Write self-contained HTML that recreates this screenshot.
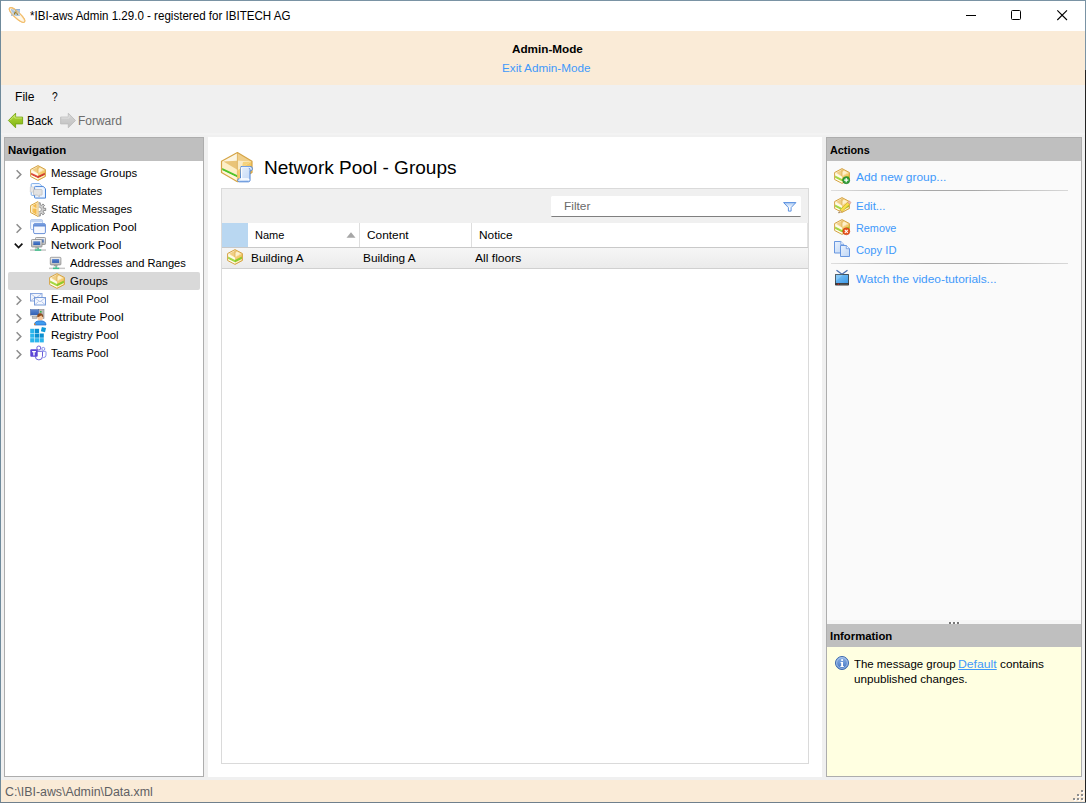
<!DOCTYPE html>
<html><head><meta charset="utf-8"><title>IBI-aws Admin</title>
<style>
*{box-sizing:border-box;margin:0;padding:0}
html,body{width:1086px;height:803px;overflow:hidden;background:#f0f0f0}
body{font-family:"Liberation Sans",sans-serif;font-size:12px;color:#000;position:relative}
.a{position:absolute}
.t{position:absolute;white-space:pre;line-height:16px;height:16px}
svg{position:absolute;overflow:visible}
</style></head><body>

<svg width="0" height="0" style="position:absolute"><defs>
<linearGradient id="gBoxL" x1="0" y1="0" x2="0" y2="1"><stop offset="0" stop-color="#fff6dc"/><stop offset="1" stop-color="#f9e2a6"/></linearGradient>
<linearGradient id="gBoxR" x1="0" y1="0" x2="1" y2="1"><stop offset="0" stop-color="#f7d787"/><stop offset="1" stop-color="#efb944"/></linearGradient>
<linearGradient id="gBoxT" x1="0" y1="0" x2="1" y2="1"><stop offset="0" stop-color="#fffaf0"/><stop offset="1" stop-color="#f2c767"/></linearGradient>
<linearGradient id="gGreen" x1="0" y1="0" x2="0" y2="1"><stop offset="0" stop-color="#b4d93a"/><stop offset="1" stop-color="#7fb414"/></linearGradient>
<linearGradient id="gGrey" x1="0" y1="0" x2="0" y2="1"><stop offset="0" stop-color="#d6d6d6"/><stop offset="1" stop-color="#c0c0c0"/></linearGradient>
<linearGradient id="gPage" x1="0" y1="0" x2="1" y2="1"><stop offset="0" stop-color="#eaf2fd"/><stop offset="1" stop-color="#bfd6f5"/></linearGradient>
<linearGradient id="gTv" x1="0" y1="0" x2="1" y2="1"><stop offset="0" stop-color="#7cc4f7"/><stop offset="1" stop-color="#3f9ae8"/></linearGradient>
<linearGradient id="gInfo" x1="0" y1="0" x2="0" y2="1"><stop offset="0" stop-color="#8fb3e6"/><stop offset="1" stop-color="#3f73c2"/></linearGradient>
<linearGradient id="gScr" x1="0" y1="0" x2="0" y2="1"><stop offset="0" stop-color="#5a86cf"/><stop offset="1" stop-color="#2f5fb5"/></linearGradient>
<linearGradient id="gMon" x1="0" y1="0" x2="0" y2="1"><stop offset="0" stop-color="#f4f4f4"/><stop offset="1" stop-color="#b8b8b8"/></linearGradient>
<linearGradient id="gFun" x1="0" y1="0" x2="0" y2="1"><stop offset="0" stop-color="#a6c7f2"/><stop offset=".6" stop-color="#ffffff"/></linearGradient>
<linearGradient id="gWinH" x1="0" y1="0" x2="0" y2="1"><stop offset="0" stop-color="#7ea3e2"/><stop offset="1" stop-color="#5b86d2"/></linearGradient>
<linearGradient id="gStat" x1="0" y1="0" x2="1" y2="0"><stop offset="0" stop-color="#f6c964"/><stop offset=".55" stop-color="#f3b84a"/><stop offset="1" stop-color="#fdf3da"/></linearGradient>
</defs></svg>

<div class="a" style="left:0px;top:0px;width:1086px;height:803px;background:#f0f0f0;"></div>
<div class="a" style="left:1px;top:1px;width:1084px;height:30px;background:#fff;"></div>
<div class="a" style="left:1px;top:31px;width:1084px;height:54px;background:#faebd7;"></div>
<div class="a" style="left:1px;top:780px;width:1084px;height:22px;background:#faebd7;"></div>
<div class="a" style="left:0px;top:0px;width:1086px;height:1px;background:#7a93a4;"></div>
<div class="a" style="left:0px;top:0px;width:1px;height:803px;background:#6f8a9b;"></div>
<div class="a" style="left:1085px;top:0px;width:1px;height:70px;background:#7a93a4;"></div>
<div class="a" style="left:1085px;top:70px;width:1px;height:733px;background:#222;"></div>
<div class="a" style="left:0px;top:802px;width:1086px;height:1px;background:#6f7f8c;"></div>
<div class="a" style="left:1px;top:133px;width:1084px;height:2px;background:#f3f3f3;"></div>
<svg style="left:9px;top:7px" width="16" height="16" viewBox="0 0 16 16">
<ellipse cx="8" cy="8" rx="10.200" ry="3" transform="rotate(43 8 8)" fill="#fff8ea" stroke="#efae4c" stroke-width="1.100"/>
<rect x="2" y="2" width="9" height="7" fill="#a3c0e0" opacity=".9"/>
<rect x="2" y="2" width="9" height="1" fill="#8fb0d6"/>
<path d="M5.100 7.700l1.700-3.800 2 3.800" fill="none" stroke="#9c7616" stroke-width="1.200"/>
<ellipse cx="8" cy="8" rx="10.200" ry="3" transform="rotate(43 8 8)" fill="none" stroke="#f3c47a" stroke-width="1.100" stroke-opacity=".7"/>
<ellipse cx="8.200" cy="8.200" rx="9" ry="1.900" transform="rotate(43 8.200 8.200)" fill="none" stroke="#fdf0d8" stroke-width=".7" stroke-opacity=".9"/>
</svg>
<svg style="left:0;top:0" width="1086" height="31"><path d="M966 15.500h10" stroke="#000" stroke-width="1"/><rect x="1011.500" y="10.500" width="9" height="9" rx="1" fill="none" stroke="#000" stroke-width="1"/><path d="M1057.300 10.300l9.700 9.700M1067 10.300l-9.700 9.700" stroke="#000" stroke-width="1.100"/></svg>
<svg style="left:8px;top:112px" width="16" height="16" viewBox="0 0 16 16">
<path d="M0.400 8.500L7.600 1.200v3.900h7v6.800h-7v3.900z" fill="url(#gGreen)" stroke="#76a512" stroke-width=".9" stroke-linejoin="round"/>
<path d="M2 8.300L6.800 3.500v2.500h7" fill="none" stroke="#d3ec86" stroke-width=".9" opacity=".9"/>
</svg>
<svg style="left:60px;top:112px" width="16" height="16" viewBox="0 0 16 16">
<path d="M15.500 8.500L8.300 1.200v3.900h-7.700v6.800h7.700v3.900z" fill="url(#gGrey)" stroke="#bdbdbd" stroke-width=".9" stroke-linejoin="round"/>
<path d="M1.400 6h7.700V3.400" fill="none" stroke="#e4e4e4" stroke-width=".9" opacity=".9"/>
</svg>
<div class="a" style="left:4px;top:137px;width:200px;height:640px;background:#fff;border:1px solid #adadad"></div>
<div class="a" style="left:5px;top:138px;width:198px;height:23px;background:#bfbfbf;"></div>
<div class="a" style="left:8px;top:272px;width:192px;height:18px;background:#d9d9d9;border-radius:2px"></div>
<svg style="left:30px;top:165px" width="16" height="16" viewBox="0 0 16 16">
<polygon points="8,0.6 15.4,4.5 15.4,11.5 8,15.4 0.6,11.5 0.6,4.5" fill="#fffbe8"/>
<polygon points="8,8.2 15.4,4.5 15.4,11.5 8,15.4" fill="url(#gBoxR)"/>
<polygon points="8,0.6 15.4,4.5 8,8.4 0.6,4.5" fill="url(#gBoxT)"/>
<polygon points="8,1.800 8,8 2.500,4.800" fill="#edc877" opacity=".8"/>
<polygon points="8,1.800 13.500,4.800 8,8" fill="#fff3d4" opacity=".85"/>
<polygon points="8,1.200 10.500,2.600 8,4" fill="#f2c86a" opacity=".8"/>
<path d="M8 1.500v6.800" stroke="#d9a94e" stroke-width=".7"/>
<polygon points="1.100,7.8 8,11.1 8,13.2 1.100,9.9" fill="#dd4a3c"/>
<polygon points="8,11.1 14.900,7.8 14.900,9.9 8,13.2" fill="#cf3b30"/>
<polygon points="1.100,9.9 8,13.2 8,14.900 1.100,11.200" fill="#fffce6"/>
<polygon points="8,13.2 14.900,9.9 14.900,11.200 8,14.900" fill="#fdf1c4"/>
<polygon points="8,0.6 15.4,4.5 15.4,11.5 8,15.4 0.6,11.5 0.6,4.5" fill="none" stroke="#d5a446" stroke-width="1" stroke-linejoin="round"/>
</svg>
<svg style="left:30px;top:183px" width="16" height="16" viewBox="0 0 16 16">
<path d="M2.200 0.600h7.200l2 2v9.800H2.200a1 1 0 0 1-1-1V1.600a1 1 0 0 1 1-1z" fill="#f7fbff" stroke="#6ea3e6" stroke-width=".9" stroke-linejoin="round"/>
<path d="M5.400 3.400h7.800l2.300 2.300v9.400H5.400a.9.900 0 0 1-.9-.9V4.300a.9.900 0 0 1 .9-.9z" fill="#dfebfc" stroke="#4a86da" stroke-width="1" stroke-linejoin="round"/>
<path d="M6.200 4.600h6.400l1.800 1.800v7.400H6.200z" fill="#eef5ff"/>
<rect x="0.300" y="3.900" width="3.600" height="5.200" rx=".6" fill="#e8e8e8" stroke="#cdcdcd" stroke-width=".7"/>
<path d="M4.200 6.500h7.200a.7.700 0 0 1 .7.700v4.200a.7.700 0 0 1-.7.700H9.300v1.900L7.600 12.100H4.200a.7.700 0 0 1-.7-.7V7.200a.7.700 0 0 1 .7-.7z" fill="#e2e2e2" stroke="#b9b9b9" stroke-width=".7"/>
</svg>
<svg style="left:30px;top:201px" width="16" height="16" viewBox="0 0 16 16">
<path d="M8.00 3.83 L7.95 1.80 L10.25 1.80 L10.20 3.83 L11.56 4.39 L12.95 2.92 L14.58 4.55 L13.11 5.94 L13.67 7.30 L15.70 7.25 L15.70 9.55 L13.67 9.50 L13.11 10.86 L14.58 12.25 L12.95 13.88 L11.56 12.41 L10.20 12.97 L10.25 15.00 L7.95 15.00 L8.00 12.97 L6.64 12.41 L5.25 13.88 L3.62 12.25 L5.09 10.86 L4.53 9.50 L2.50 9.55 L2.50 7.25 L4.53 7.30 L5.09 5.94 L3.62 4.55 L5.25 2.92 L6.64 4.39z" fill="#cfcfcf" stroke="#777" stroke-width=".8" stroke-linejoin="round"/>
<circle cx="9.100" cy="8.400" r="2.300" fill="#fbfbfb" stroke="#8a8a8a" stroke-width=".7"/>
<polygon points="8,0.600 8,15.400 0.600,11.500 0.600,4.500" fill="#fff7df"/>
<polygon points="8,1.500 8,14.600 2.300,11.300 2.300,4.800" fill="url(#gStat)"/>
<polygon points="8,8 2.300,4.800 2.300,7.500" fill="#fdf1cf" opacity=".7"/>
<polygon points="8,0.600 8,15.400 0.600,11.500 0.600,4.500" fill="none" stroke="#d9a63f" stroke-width="1" stroke-linejoin="round"/>
<path d="M8 1v14" stroke="#f3e3bd" stroke-width="1.200"/>
</svg>
<svg style="left:30px;top:219px" width="16" height="16" viewBox="0 0 16 16">
<rect x="0.6" y="0.6" width="12" height="10" rx="1.4" fill="#f7faff" stroke="#a9c2ea" stroke-width="1"/>
<path d="M0.6 2a1.4 1.4 0 0 1 1.4-1.4h9.2a1.4 1.4 0 0 1 1.4 1.4v1.3H0.6z" fill="#c3d5f2"/>
<rect x="3.6" y="4.6" width="11.8" height="10" rx="1.4" fill="#f6f8fe" stroke="#6a91d8" stroke-width="1"/>
<path d="M3.6 6a1.4 1.4 0 0 1 1.4-1.4h9a1.4 1.4 0 0 1 1.4 1.4v1.4H3.6z" fill="url(#gWinH)"/>
</svg>
<svg style="left:30px;top:237px" width="16" height="16" viewBox="0 0 16 16"><rect x="5.5" y="0.5" width="10" height="7" rx="0.8" fill="url(#gMon)" stroke="#8a8a8a" stroke-width=".8"/>
<rect x="7.3" y="2.3" width="6.4" height="3.2" fill="url(#gScr)"/><rect x="1.5" y="2.5" width="10.5" height="7.5" rx="0.8" fill="url(#gMon)" stroke="#8a8a8a" stroke-width=".8"/>
<rect x="3.3" y="4.3" width="6.9" height="3.7" fill="url(#gScr)"/>
<path d="M5.5 10.2h3l.8 1.3H4.7z" fill="#9a9a9a"/>
<rect x="0" y="12.3" width="16" height="1.5" fill="#c8c8c8"/>
<rect x="4.8" y="12.3" width="6.4" height="1.5" fill="#3fbf8a"/>
<rect x="7.4" y="10.8" width="1.4" height="1.6" fill="#3fbf8a"/>
</svg>
<svg style="left:49px;top:255px" width="16" height="16" viewBox="0 0 16 16"><rect x="1.3" y="2.3" width="10.6" height="7.6" rx="0.8" fill="url(#gMon)" stroke="#8a8a8a" stroke-width=".8"/>
<rect x="3.1" y="4.1" width="7.0" height="3.8" fill="url(#gScr)"/>
<path d="M5.2 10.1h3l.9 1.2H4.3z" fill="#9a9a9a"/>
<rect x="0" y="12.6" width="16" height="1.5" fill="#c8c8c8"/>
<rect x="4" y="12.6" width="6.2" height="1.5" fill="#3fbf8a"/>
<rect x="6.4" y="11.2" width="1.5" height="1.5" fill="#3fbf8a"/>
</svg>
<svg style="left:49px;top:273px" width="16" height="16" viewBox="0 0 16 16">
<polygon points="8,0.6 15.4,4.5 15.4,11.5 8,15.4 0.6,11.5 0.6,4.5" fill="#fffbe8"/>
<polygon points="8,8.2 15.4,4.5 15.4,11.5 8,15.4" fill="url(#gBoxR)"/>
<polygon points="8,0.6 15.4,4.5 8,8.4 0.6,4.5" fill="url(#gBoxT)"/>
<polygon points="8,1.800 8,8 2.500,4.800" fill="#edc877" opacity=".8"/>
<polygon points="8,1.800 13.500,4.800 8,8" fill="#fff3d4" opacity=".85"/>
<polygon points="8,1.200 10.500,2.600 8,4" fill="#f2c86a" opacity=".8"/>
<path d="M8 1.500v6.800" stroke="#d9a94e" stroke-width=".7"/>
<polygon points="1.100,7.6 8,10.899999999999999 8,13.399999999999999 1.100,10.1" fill="#a4d743"/>
<polygon points="8,10.899999999999999 14.900,7.6 14.900,10.1 8,13.399999999999999" fill="#8ccb2c"/>
<polygon points="1.100,10.1 8,13.399999999999999 8,14.900 1.100,11.200" fill="#fffce6"/>
<polygon points="8,13.399999999999999 14.900,10.1 14.900,11.200 8,14.900" fill="#fdf1c4"/>
<polygon points="8,0.6 15.4,4.5 15.4,11.5 8,15.4 0.6,11.5 0.6,4.5" fill="none" stroke="#d5a446" stroke-width="1" stroke-linejoin="round"/>
</svg>
<svg style="left:30px;top:291px" width="16" height="16" viewBox="0 0 16 16">
<rect x="0.5" y="2.5" width="11.5" height="7.5" fill="#f3f6fd" stroke="#7f9fdb" stroke-width=".9"/>
<path d="M0.8 2.8l5.4 4 5.4-4M0.8 9.8l3.8-3.3M11.6 9.8L7.8 6.5" fill="none" stroke="#a3b9e4" stroke-width=".8"/>
<rect x="4.5" y="6.5" width="11" height="7.5" fill="#f5f8fe" stroke="#6c92d6" stroke-width=".9"/>
<path d="M4.8 6.8l5.2 4 5.2-4M4.8 13.8l3.7-3.3M15.2 13.8l-3.7-3.3" fill="none" stroke="#a3b9e4" stroke-width=".8"/>
</svg>
<svg style="left:30px;top:309px" width="16" height="16" viewBox="0 0 16 16">
<rect x="8.5" y="0.5" width="5.5" height="9" fill="#b9b9b9" stroke="#8a8a8a" stroke-width=".6"/>
<rect x="10" y="2" width="1.6" height="1.6" fill="#35b24a"/>
<rect x="0.4" y="0.6" width="8.400" height="5.600" fill="url(#gScr)" stroke="#5470a8" stroke-width=".6"/>
<rect x="0.400" y="6.200" width="8.400" height="1.400" fill="#dcdcdc"/>
<rect x="2.200" y="7.600" width="4.600" height="1.800" fill="#c4c4c4" stroke="#8f8f8f" stroke-width=".5"/>
<path d="M4.4 16c0-3 2-4.2 5.8-4.2S16 13 16 16z" fill="#3f9cf0" stroke="#2368c4" stroke-width=".7"/>
<circle cx="10.2" cy="8.4" r="2.9" fill="#f6c9a0"/>
<path d="M7.2 8.2c-.3-2.6 1.2-3.9 3-3.9s3.4 1.3 3 3.9c-1-.4-1.600-1.100-2-2-.9 1-2.400 1.700-4 2z" fill="#8a4b1d"/>
<rect x="4" y="14.6" width="1.400" height="1.4" fill="#ee8a22"/>
</svg>
<svg style="left:30px;top:327px" width="16" height="16" viewBox="0 0 16 16">
<g fill="#2bb5ec">
<rect x="0.200" y="1.800" width="4.200" height="4.200"/><rect x="0.200" y="6.500" width="4.200" height="4.200"/>
<rect x="0.200" y="11.200" width="4.200" height="4.200"/><rect x="4.900" y="11.200" width="4.200" height="4.200"/><rect x="9.600" y="11.200" width="4.200" height="4.200"/>
</g>
<g fill="#0a8fd0">
<rect x="4.900" y="1.800" width="4.200" height="4.200"/><rect x="4.900" y="6.500" width="4.200" height="4.200"/><rect x="9.600" y="6.500" width="4.200" height="4.200"/>
</g>
<rect x="11.300" y="0.400" width="4.300" height="4.300" fill="#0f9ad8" transform="rotate(14 13.400 2.500)"/>
</svg>
<svg style="left:30px;top:345px" width="16" height="16" viewBox="0 0 16 16">
<circle cx="13.300" cy="3.9" r="1.500" fill="#fff" stroke="#7b83eb" stroke-width=".9"/>
<path d="M11.8 6.3h3.500a.700.700 0 0 1 .7.700v3.200a2.300 2.300 0 0 1-2.300 2.300h-.6" fill="#fff" stroke="#7b83eb" stroke-width=".9"/>
<circle cx="8.8" cy="3" r="2" fill="#fff" stroke="#6a5fd8" stroke-width="1"/>
<path d="M6.5 6.300h5.300a.7.700 0 0 1 .7.700v4.300a3.600 3.600 0 0 1-7.200 0" fill="#fff" stroke="#6a5fd8" stroke-width="1"/>
<rect x="0.300" y="4.300" width="7.4" height="7.4" rx=".9" fill="#5b45d6"/>
<path d="M2.100 6.100h3.800v1.200H4.700v3.100H3.300V7.300H2.100z" fill="#fff"/>
</svg>
<svg style="left:0;top:0" width="210" height="400"><path d="M16.600 170.3l4.200 4.200-4.200 4.200" fill="none" stroke="#8c8c8c" stroke-width="1.500"/><path d="M16.600 224.3l4.200 4.200-4.200 4.200" fill="none" stroke="#8c8c8c" stroke-width="1.500"/><path d="M16.600 296.3l4.200 4.200-4.200 4.200" fill="none" stroke="#8c8c8c" stroke-width="1.500"/><path d="M16.600 314.3l4.200 4.200-4.200 4.200" fill="none" stroke="#8c8c8c" stroke-width="1.500"/><path d="M16.600 332.3l4.200 4.200-4.200 4.200" fill="none" stroke="#8c8c8c" stroke-width="1.500"/><path d="M16.600 350.3l4.200 4.200-4.200 4.200" fill="none" stroke="#8c8c8c" stroke-width="1.500"/><path d="M14.800 243.700l3.800 3.800 3.800-3.800" fill="none" stroke="#111" stroke-width="1.700"/></svg>
<div class="a" style="left:208px;top:137px;width:614px;height:640px;background:#fff;"></div>
<svg style="left:221px;top:152px" width="32" height="32" viewBox="0 0 32 32">
<polygon points="16.400,0.500 31,9.300 31,20.600 16.400,29.700 0.500,20.600 0.500,9.300" fill="#fdeec6"/>
<polygon points="16.400,18.200 31,9.300 31,20.600 16.400,29.700" fill="url(#gBoxR)"/>
<polygon points="16.400,0.800 1.200,9.300 16.400,8.800" fill="#fcf5e2"/>
<polygon points="16.400,0.800 31,9.300 16.400,8.800" fill="#f0cf8a"/>
<polygon points="2.500,9.400 16.400,8.800 16.400,17.800" fill="#e9c478"/>
<polygon points="16.400,8.800 30,9.400 16.400,17.800" fill="#f9ebc6"/>
<polygon points="22,10 30.500,9.600 21,15.400" fill="#f5cd6a" opacity=".8"/>
<path d="M16.400 1v17" stroke="#ddb260" stroke-width=".9"/>
<polygon points="1.200,15.900 16.400,23.300 16.400,25.500 1.200,18.200" fill="#4fc42a"/>
<polygon points="1.200,18.200 16.400,25.500 16.400,29 1.200,20.400" fill="#fff6da"/>
<polygon points="16.400,0.500 31,9.300 31,20.600 16.400,29.700 0.500,20.600 0.500,9.300" fill="none" stroke="#d5a446" stroke-width="1.200" stroke-linejoin="round"/>
<path d="M16.400 18.200v11.300" stroke="#e6bb62" stroke-width=".8"/>
<path d="M20 14.500h9.300c1.300 0 2.100 1 2.100 2.200s-.8 2.100-1.800 2.100h-.6v9.500c0 .9-.7 1.500-1.500 1.500h-9.300c-.9 0-1.600-.7-1.600-1.500s.7-1.500 1.600-1.500h1.300z" fill="url(#gPage)" stroke="#4a82d4" stroke-width="1" stroke-linejoin="round"/>
<path d="M20.600 15.300v11.400" stroke="#ffffff" stroke-width="1.100"/>
<path d="M20.600 15.200h8.400" stroke="#eef5ff" stroke-width=".9"/>
<path d="M18.400 27h8.300c.7 0 1.200.5 1.200 1.300" fill="none" stroke="#ffffff" stroke-width="1.400"/>
<path d="M29 18.800c.200-1.300-.200-2.400-1.200-2.700" fill="none" stroke="#4a82d4" stroke-width=".8"/>
</svg>
<div class="a" style="left:221px;top:188px;width:588px;height:576px;background:#fff;border:1px solid #dadada"></div>
<div class="a" style="left:222px;top:189px;width:586px;height:34px;background:#f0f0f0;"></div>
<div class="a" style="left:551px;top:196px;width:250px;height:21px;background:#fff;border-bottom:1px solid #7f7f7f;border-radius:1.5px"></div>
<svg style="left:783px;top:202px" width="14" height="10" viewBox="0 0 14 10">
<path d="M0.600 0.600h12.300L8.100 5.600v3.500H5.400V5.600z" fill="url(#gFun)" stroke="#4b86dc" stroke-width=".9" stroke-linejoin="round"/>
</svg>
<div class="a" style="left:222px;top:223px;width:26px;height:24px;background:#b9d7f1;"></div>
<div class="a" style="left:222px;top:247px;width:586px;height:1px;background:#c9c9c9;"></div>
<div class="a" style="left:359px;top:223px;width:1px;height:24px;background:#dedede;"></div>
<div class="a" style="left:471px;top:223px;width:1px;height:24px;background:#dedede;"></div>
<div class="a" style="left:807px;top:223px;width:1px;height:24px;background:#e2e2e2;"></div>
<div class="a" style="left:222px;top:248px;width:586px;height:20px;background:linear-gradient(#f6f6f6,#ebebeb);"></div>
<div class="a" style="left:222px;top:268px;width:586px;height:1px;background:#d0d0d0;"></div>
<svg style="left:346px;top:232px" width="11" height="6"><polygon points="0.500,5.700 5,0.300 9.500,5.700" fill="#a6a6a6"/></svg>
<svg style="left:227px;top:249px" width="16" height="16" viewBox="0 0 16 16">
<polygon points="8,0.6 15.4,4.5 15.4,11.5 8,15.4 0.6,11.5 0.6,4.5" fill="#fffbe8"/>
<polygon points="8,8.2 15.4,4.5 15.4,11.5 8,15.4" fill="url(#gBoxR)"/>
<polygon points="8,0.6 15.4,4.5 8,8.4 0.6,4.5" fill="url(#gBoxT)"/>
<polygon points="8,1.800 8,8 2.500,4.800" fill="#edc877" opacity=".8"/>
<polygon points="8,1.800 13.500,4.800 8,8" fill="#fff3d4" opacity=".85"/>
<polygon points="8,1.200 10.500,2.600 8,4" fill="#f2c86a" opacity=".8"/>
<path d="M8 1.500v6.800" stroke="#d9a94e" stroke-width=".7"/>
<polygon points="1.100,7.6 8,10.899999999999999 8,13.399999999999999 1.100,10.1" fill="#a4d743"/>
<polygon points="8,10.899999999999999 14.900,7.6 14.900,10.1 8,13.399999999999999" fill="#8ccb2c"/>
<polygon points="1.100,10.1 8,13.399999999999999 8,14.900 1.100,11.200" fill="#fffce6"/>
<polygon points="8,13.399999999999999 14.900,10.1 14.900,11.200 8,14.900" fill="#fdf1c4"/>
<polygon points="8,0.6 15.4,4.5 15.4,11.5 8,15.4 0.6,11.5 0.6,4.5" fill="none" stroke="#d5a446" stroke-width="1" stroke-linejoin="round"/>
</svg>
<div class="a" style="left:826px;top:137px;width:256px;height:640px;background:#fafafa;border:1px solid #adadad"></div>
<div class="a" style="left:827px;top:138px;width:254px;height:23px;background:#bfbfbf;"></div>
<div class="a" style="left:831px;top:190px;width:237px;height:1px;background:linear-gradient(90deg,#dedede,#a8a8a8 40%,#a8a8a8 60%,#d8d8d8);"></div>
<div class="a" style="left:831px;top:263px;width:237px;height:1px;background:linear-gradient(90deg,#dedede,#a8a8a8 40%,#a8a8a8 60%,#d8d8d8);"></div>
<svg style="left:834px;top:168px" width="16" height="16" viewBox="0 0 16 16">
<polygon points="8,0.6 15.4,4.5 15.4,11.5 8,15.4 0.6,11.5 0.6,4.5" fill="#fffbe8"/>
<polygon points="8,8.2 15.4,4.5 15.4,11.5 8,15.4" fill="url(#gBoxR)"/>
<polygon points="8,0.6 15.4,4.5 8,8.4 0.6,4.5" fill="url(#gBoxT)"/>
<polygon points="8,1.800 8,8 2.500,4.800" fill="#edc877" opacity=".8"/>
<polygon points="8,1.800 13.500,4.800 8,8" fill="#fff3d4" opacity=".85"/>
<polygon points="8,1.200 10.500,2.600 8,4" fill="#f2c86a" opacity=".8"/>
<path d="M8 1.500v6.800" stroke="#d9a94e" stroke-width=".7"/>
<polygon points="1.100,7.6 8,10.899999999999999 8,13.399999999999999 1.100,10.1" fill="#a4d743"/>
<polygon points="8,10.899999999999999 14.900,7.6 14.900,10.1 8,13.399999999999999" fill="#8ccb2c"/>
<polygon points="1.100,10.1 8,13.399999999999999 8,14.900 1.100,11.200" fill="#fffce6"/>
<polygon points="8,13.399999999999999 14.900,10.1 14.900,11.200 8,14.900" fill="#fdf1c4"/>
<polygon points="8,0.6 15.4,4.5 15.4,11.5 8,15.4 0.6,11.5 0.6,4.5" fill="none" stroke="#d5a446" stroke-width="1" stroke-linejoin="round"/>

<circle cx="12.200" cy="12.200" r="3.500" fill="#35a33b" stroke="#1f7a26" stroke-width=".7"/>
<path d="M12.200 10.100v4.200M10.100 12.200h4.200" stroke="#fff" stroke-width="1.200"/>
</svg>
<svg style="left:834px;top:197px" width="16" height="16" viewBox="0 0 16 16">
<polygon points="8,0.6 15.4,4.5 15.4,11.5 8,15.4 0.6,11.5 0.6,4.5" fill="#fffbe8"/>
<polygon points="8,8.2 15.4,4.5 15.4,11.5 8,15.4" fill="url(#gBoxR)"/>
<polygon points="8,0.6 15.4,4.5 8,8.4 0.6,4.5" fill="url(#gBoxT)"/>
<polygon points="8,1.800 8,8 2.500,4.800" fill="#edc877" opacity=".8"/>
<polygon points="8,1.800 13.500,4.800 8,8" fill="#fff3d4" opacity=".85"/>
<polygon points="8,1.200 10.500,2.600 8,4" fill="#f2c86a" opacity=".8"/>
<path d="M8 1.500v6.800" stroke="#d9a94e" stroke-width=".7"/>
<polygon points="1.100,7.6 8,10.899999999999999 8,13.399999999999999 1.100,10.1" fill="#a4d743"/>
<polygon points="8,10.899999999999999 14.900,7.6 14.900,10.1 8,13.399999999999999" fill="#8ccb2c"/>
<polygon points="1.100,10.1 8,13.399999999999999 8,14.900 1.100,11.200" fill="#fffce6"/>
<polygon points="8,13.399999999999999 14.900,10.1 14.900,11.200 8,14.900" fill="#fdf1c4"/>
<polygon points="8,0.6 15.4,4.5 15.4,11.5 8,15.4 0.6,11.5 0.6,4.5" fill="none" stroke="#d5a446" stroke-width="1" stroke-linejoin="round"/>

<path d="M13.800 5.300l1.900 1.900-7.800 7.600-1.900-1.900z" fill="#f7e04a" stroke="#c9a52a" stroke-width=".6"/>
<path d="M13.800 5.300l.9-.9a1 1 0 0 1 1.400 0l.500.500a1 1 0 0 1 0 1.400l-.9.900z" fill="#f3b7a7" stroke="#c98a7a" stroke-width=".5"/>
<path d="M6 12.900l1.900 1.900-3.300 1.300z" fill="#f3d2a2" stroke="#b98a4a" stroke-width=".5"/>
<path d="M4.600 16.100l1-.4-.7-.7z" fill="#222"/>
</svg>
<svg style="left:834px;top:219px" width="16" height="16" viewBox="0 0 16 16">
<polygon points="8,0.6 15.4,4.5 15.4,11.5 8,15.4 0.6,11.5 0.6,4.5" fill="#fffbe8"/>
<polygon points="8,8.2 15.4,4.5 15.4,11.5 8,15.4" fill="url(#gBoxR)"/>
<polygon points="8,0.6 15.4,4.5 8,8.4 0.6,4.5" fill="url(#gBoxT)"/>
<polygon points="8,1.800 8,8 2.500,4.800" fill="#edc877" opacity=".8"/>
<polygon points="8,1.800 13.500,4.800 8,8" fill="#fff3d4" opacity=".85"/>
<polygon points="8,1.200 10.500,2.600 8,4" fill="#f2c86a" opacity=".8"/>
<path d="M8 1.500v6.800" stroke="#d9a94e" stroke-width=".7"/>
<polygon points="1.100,7.6 8,10.899999999999999 8,13.399999999999999 1.100,10.1" fill="#a4d743"/>
<polygon points="8,10.899999999999999 14.900,7.6 14.900,10.1 8,13.399999999999999" fill="#8ccb2c"/>
<polygon points="1.100,10.1 8,13.399999999999999 8,14.900 1.100,11.200" fill="#fffce6"/>
<polygon points="8,13.399999999999999 14.900,10.1 14.900,11.200 8,14.900" fill="#fdf1c4"/>
<polygon points="8,0.6 15.4,4.5 15.4,11.5 8,15.4 0.6,11.5 0.6,4.5" fill="none" stroke="#d5a446" stroke-width="1" stroke-linejoin="round"/>

<circle cx="12.300" cy="12.300" r="3.500" fill="#e9531d" stroke="#c43d10" stroke-width=".6"/>
<path d="M10.800 10.800l3 3M13.800 10.800l-3 3" stroke="#fff" stroke-width="1.100"/>
</svg>
<svg style="left:834px;top:241px" width="16" height="16" viewBox="0 0 16 16">
<path d="M0.5 0.500h6.300l3.200 3.200v8.300H0.500z" fill="url(#gPage)" stroke="#5a8ddc" stroke-width=".9" stroke-linejoin="round"/>
<path d="M6.800 0.500v3.200h3.200" fill="#f2f7ff" stroke="#5a8ddc" stroke-width=".7" stroke-linejoin="round"/>
<path d="M6.500 4.500h5.800l3.200 3.200v7.800H6.500z" fill="url(#gPage)" stroke="#5a8ddc" stroke-width=".9" stroke-linejoin="round"/>
<path d="M12.300 4.500v3.200h3.200" fill="#f2f7ff" stroke="#5a8ddc" stroke-width=".7" stroke-linejoin="round"/>
</svg>
<svg style="left:834px;top:270px" width="16" height="16" viewBox="0 0 16 16">
<path d="M2.500 0.300L8 4.200 13.500 0.300" fill="none" stroke="#4a6fb0" stroke-width="1.300"/>
<rect x="1" y="4" width="14" height="11.600" rx=".8" fill="#3a3a3a"/>
<rect x="1.800" y="4.800" width="12.400" height="8.200" fill="url(#gTv)"/>
<polygon points="1.800,4.800 9,4.800 1.800,11" fill="#a5d8fb" opacity=".45"/>
<rect x="3.600" y="13.700" width="1.600" height="1" fill="#e02a2a"/>
<g fill="#8a8a8a"><rect x="6.500" y="13.800" width="1" height=".8"/><rect x="8.500" y="13.800" width="1" height=".8"/><rect x="10.500" y="13.800" width="1" height=".8"/><rect x="12.500" y="13.800" width="1" height=".8"/></g>
</svg>
<div class="a" style="left:827px;top:620px;width:254px;height:4px;background:#f5f5f5;"></div>
<div class="a" style="left:949px;top:622px;width:3px;height:2px;background:#fff;"></div>
<div class="a" style="left:949px;top:622px;width:2px;height:2px;background:#787878;"></div>
<div class="a" style="left:953px;top:622px;width:3px;height:2px;background:#fff;"></div>
<div class="a" style="left:953px;top:622px;width:2px;height:2px;background:#787878;"></div>
<div class="a" style="left:957px;top:622px;width:3px;height:2px;background:#fff;"></div>
<div class="a" style="left:957px;top:622px;width:2px;height:2px;background:#787878;"></div>
<div class="a" style="left:827px;top:624px;width:254px;height:23px;background:#bfbfbf;"></div>
<div class="a" style="left:827px;top:647px;width:254px;height:129px;background:#ffffe1;"></div>
<svg style="left:835px;top:656px" width="14" height="14" viewBox="0 0 14 14">
<circle cx="7" cy="7" r="6.500" fill="url(#gInfo)" stroke="#3a67ad" stroke-width="1"/>
<circle cx="7" cy="7" r="5.400" fill="none" stroke="#c5d8f3" stroke-width=".8" opacity=".8"/>
<rect x="6.200" y="3.200" width="1.800" height="1.700" fill="#fff"/>
<path d="M5.600 6h2.400v4h.8v1H5.400v-1h.8V7h-.6z" fill="#fff"/>
</svg>
<div class="a" style="left:1082px;top:791px;width:2px;height:2px;background:#fff;"></div>
<div class="a" style="left:1081px;top:790px;width:2px;height:2px;background:#8e8e8e;"></div>
<div class="a" style="left:1078px;top:795px;width:2px;height:2px;background:#fff;"></div>
<div class="a" style="left:1077px;top:794px;width:2px;height:2px;background:#8e8e8e;"></div>
<div class="a" style="left:1082px;top:795px;width:2px;height:2px;background:#fff;"></div>
<div class="a" style="left:1081px;top:794px;width:2px;height:2px;background:#8e8e8e;"></div>
<div class="a" style="left:1074px;top:799px;width:2px;height:2px;background:#fff;"></div>
<div class="a" style="left:1073px;top:798px;width:2px;height:2px;background:#8e8e8e;"></div>
<div class="a" style="left:1078px;top:799px;width:2px;height:2px;background:#fff;"></div>
<div class="a" style="left:1077px;top:798px;width:2px;height:2px;background:#8e8e8e;"></div>
<div class="a" style="left:1082px;top:799px;width:2px;height:2px;background:#fff;"></div>
<div class="a" style="left:1081px;top:798px;width:2px;height:2px;background:#8e8e8e;"></div>
<div class="t" style="left:29.66px;top:8px;font-size:12px;transform:scaleX(0.9642);transform-origin:0 0;">*IBI-aws Admin 1.29.0 - registered for IBITECH AG</div>
<div class="t" style="left:511.82px;top:41px;font-size:11.5px;transform:scaleX(1.0178);transform-origin:0 0;font-weight:bold;">Admin-Mode</div>
<div class="t" style="left:501.76px;top:60px;font-size:11.5px;transform:scaleX(1.0181);transform-origin:0 0;color:#3f99fb;">Exit Admin-Mode</div>
<div class="t" style="left:14.95px;top:89px;font-size:12px;transform:scaleX(1.0079);transform-origin:0 0;">File</div>
<div class="t" style="left:52.27px;top:89px;font-size:12px;transform:scaleX(0.8502);transform-origin:0 0;">?</div>
<div class="t" style="left:26.55px;top:113px;font-size:12px;transform:scaleX(0.9693);transform-origin:0 0;">Back</div>
<div class="t" style="left:78.23px;top:113px;font-size:12px;transform:scaleX(0.9979);transform-origin:0 0;color:#6d6d6d;">Forward</div>
<div class="t" style="left:7.70px;top:142px;font-size:11.5px;transform:scaleX(0.9893);transform-origin:0 0;font-weight:bold;">Navigation</div>
<div class="t" style="left:50.92px;top:165px;font-size:11.5px;transform:scaleX(0.9838);transform-origin:0 0;">Message Groups</div>
<div class="t" style="left:50.66px;top:183px;font-size:11.5px;transform:scaleX(0.9773);transform-origin:0 0;">Templates</div>
<div class="t" style="left:50.80px;top:201px;font-size:11.5px;transform:scaleX(0.9616);transform-origin:0 0;">Static Messages</div>
<div class="t" style="left:50.71px;top:219px;font-size:11.5px;transform:scaleX(1.0397);transform-origin:0 0;">Application Pool</div>
<div class="t" style="left:50.93px;top:237px;font-size:11.5px;transform:scaleX(1.0294);transform-origin:0 0;">Network Pool</div>
<div class="t" style="left:69.99px;top:255px;font-size:11.5px;transform:scaleX(0.9691);transform-origin:0 0;">Addresses and Ranges</div>
<div class="t" style="left:69.98px;top:273px;font-size:11.5px;transform:scaleX(1.0024);transform-origin:0 0;">Groups</div>
<div class="t" style="left:50.93px;top:291px;font-size:11.5px;transform:scaleX(0.9818);transform-origin:0 0;">E-mail Pool</div>
<div class="t" style="left:50.88px;top:309px;font-size:11.5px;transform:scaleX(1.0517);transform-origin:0 0;">Attribute Pool</div>
<div class="t" style="left:50.72px;top:327px;font-size:11.5px;transform:scaleX(0.9881);transform-origin:0 0;">Registry Pool</div>
<div class="t" style="left:50.66px;top:345px;font-size:11.5px;transform:scaleX(0.9551);transform-origin:0 0;">Teams Pool</div>
<div class="t" style="left:264.14px;top:154.9px;font-size:19px;line-height:25px;height:25px;transform:scaleX(1.0016);transform-origin:0 0;">Network Pool - Groups</div>
<div class="t" style="left:563.94px;top:198px;font-size:11.5px;transform:scaleX(1.0334);transform-origin:0 0;color:#6a6a6a;">Filter</div>
<div class="t" style="left:254.92px;top:227px;font-size:11.5px;transform:scaleX(0.9563);transform-origin:0 0;">Name</div>
<div class="t" style="left:366.95px;top:227px;font-size:11.5px;transform:scaleX(1.0313);transform-origin:0 0;">Content</div>
<div class="t" style="left:478.75px;top:227px;font-size:11.5px;transform:scaleX(1.0311);transform-origin:0 0;">Notice</div>
<div class="t" style="left:251.11px;top:250px;font-size:11.5px;transform:scaleX(1.0273);transform-origin:0 0;">Building A</div>
<div class="t" style="left:363.11px;top:250px;font-size:11.5px;transform:scaleX(1.0273);transform-origin:0 0;">Building A</div>
<div class="t" style="left:475.48px;top:250px;font-size:11.5px;transform:scaleX(1.0513);transform-origin:0 0;">All floors</div>
<div class="t" style="left:829.75px;top:142px;font-size:11.5px;transform:scaleX(0.9424);transform-origin:0 0;font-weight:bold;">Actions</div>
<div class="t" style="left:856.47px;top:169px;font-size:11.5px;transform:scaleX(1.0381);transform-origin:0 0;color:#3f99fb;">Add new group...</div>
<div class="t" style="left:855.92px;top:198px;font-size:11.5px;transform:scaleX(1.0004);transform-origin:0 0;color:#3f99fb;">Edit...</div>
<div class="t" style="left:855.84px;top:220px;font-size:11.5px;transform:scaleX(0.9436);transform-origin:0 0;color:#3f99fb;">Remove</div>
<div class="t" style="left:856.13px;top:242px;font-size:11.5px;transform:scaleX(0.9742);transform-origin:0 0;color:#3f99fb;">Copy ID</div>
<div class="t" style="left:856.40px;top:271px;font-size:11.5px;transform:scaleX(1.0356);transform-origin:0 0;color:#3f99fb;">Watch the video-tutorials...</div>
<div class="t" style="left:829.97px;top:628px;font-size:11.5px;transform:scaleX(0.9841);transform-origin:0 0;font-weight:bold;">Information</div>
<div class="t" style="left:854.03px;top:656px;font-size:11.5px;transform:scaleX(0.9927);transform-origin:0 0;">The message group</div>
<div class="t" style="left:957.93px;top:656px;font-size:11.5px;transform:scaleX(1.0626);transform-origin:0 0;color:#3f99fb;text-decoration:underline">Default</div>
<div class="t" style="left:999.52px;top:656px;font-size:11.5px;transform:scaleX(1.0272);transform-origin:0 0;">contains</div>
<div class="t" style="left:854.02px;top:671px;font-size:11.5px;transform:scaleX(1.0143);transform-origin:0 0;">unpublished changes.</div>
<div class="t" style="left:4.63px;top:784px;font-size:12px;transform:scaleX(1.0309);transform-origin:0 0;color:#5f5f63;">C:\IBI-aws\Admin\Data.xml</div>
</body></html>
